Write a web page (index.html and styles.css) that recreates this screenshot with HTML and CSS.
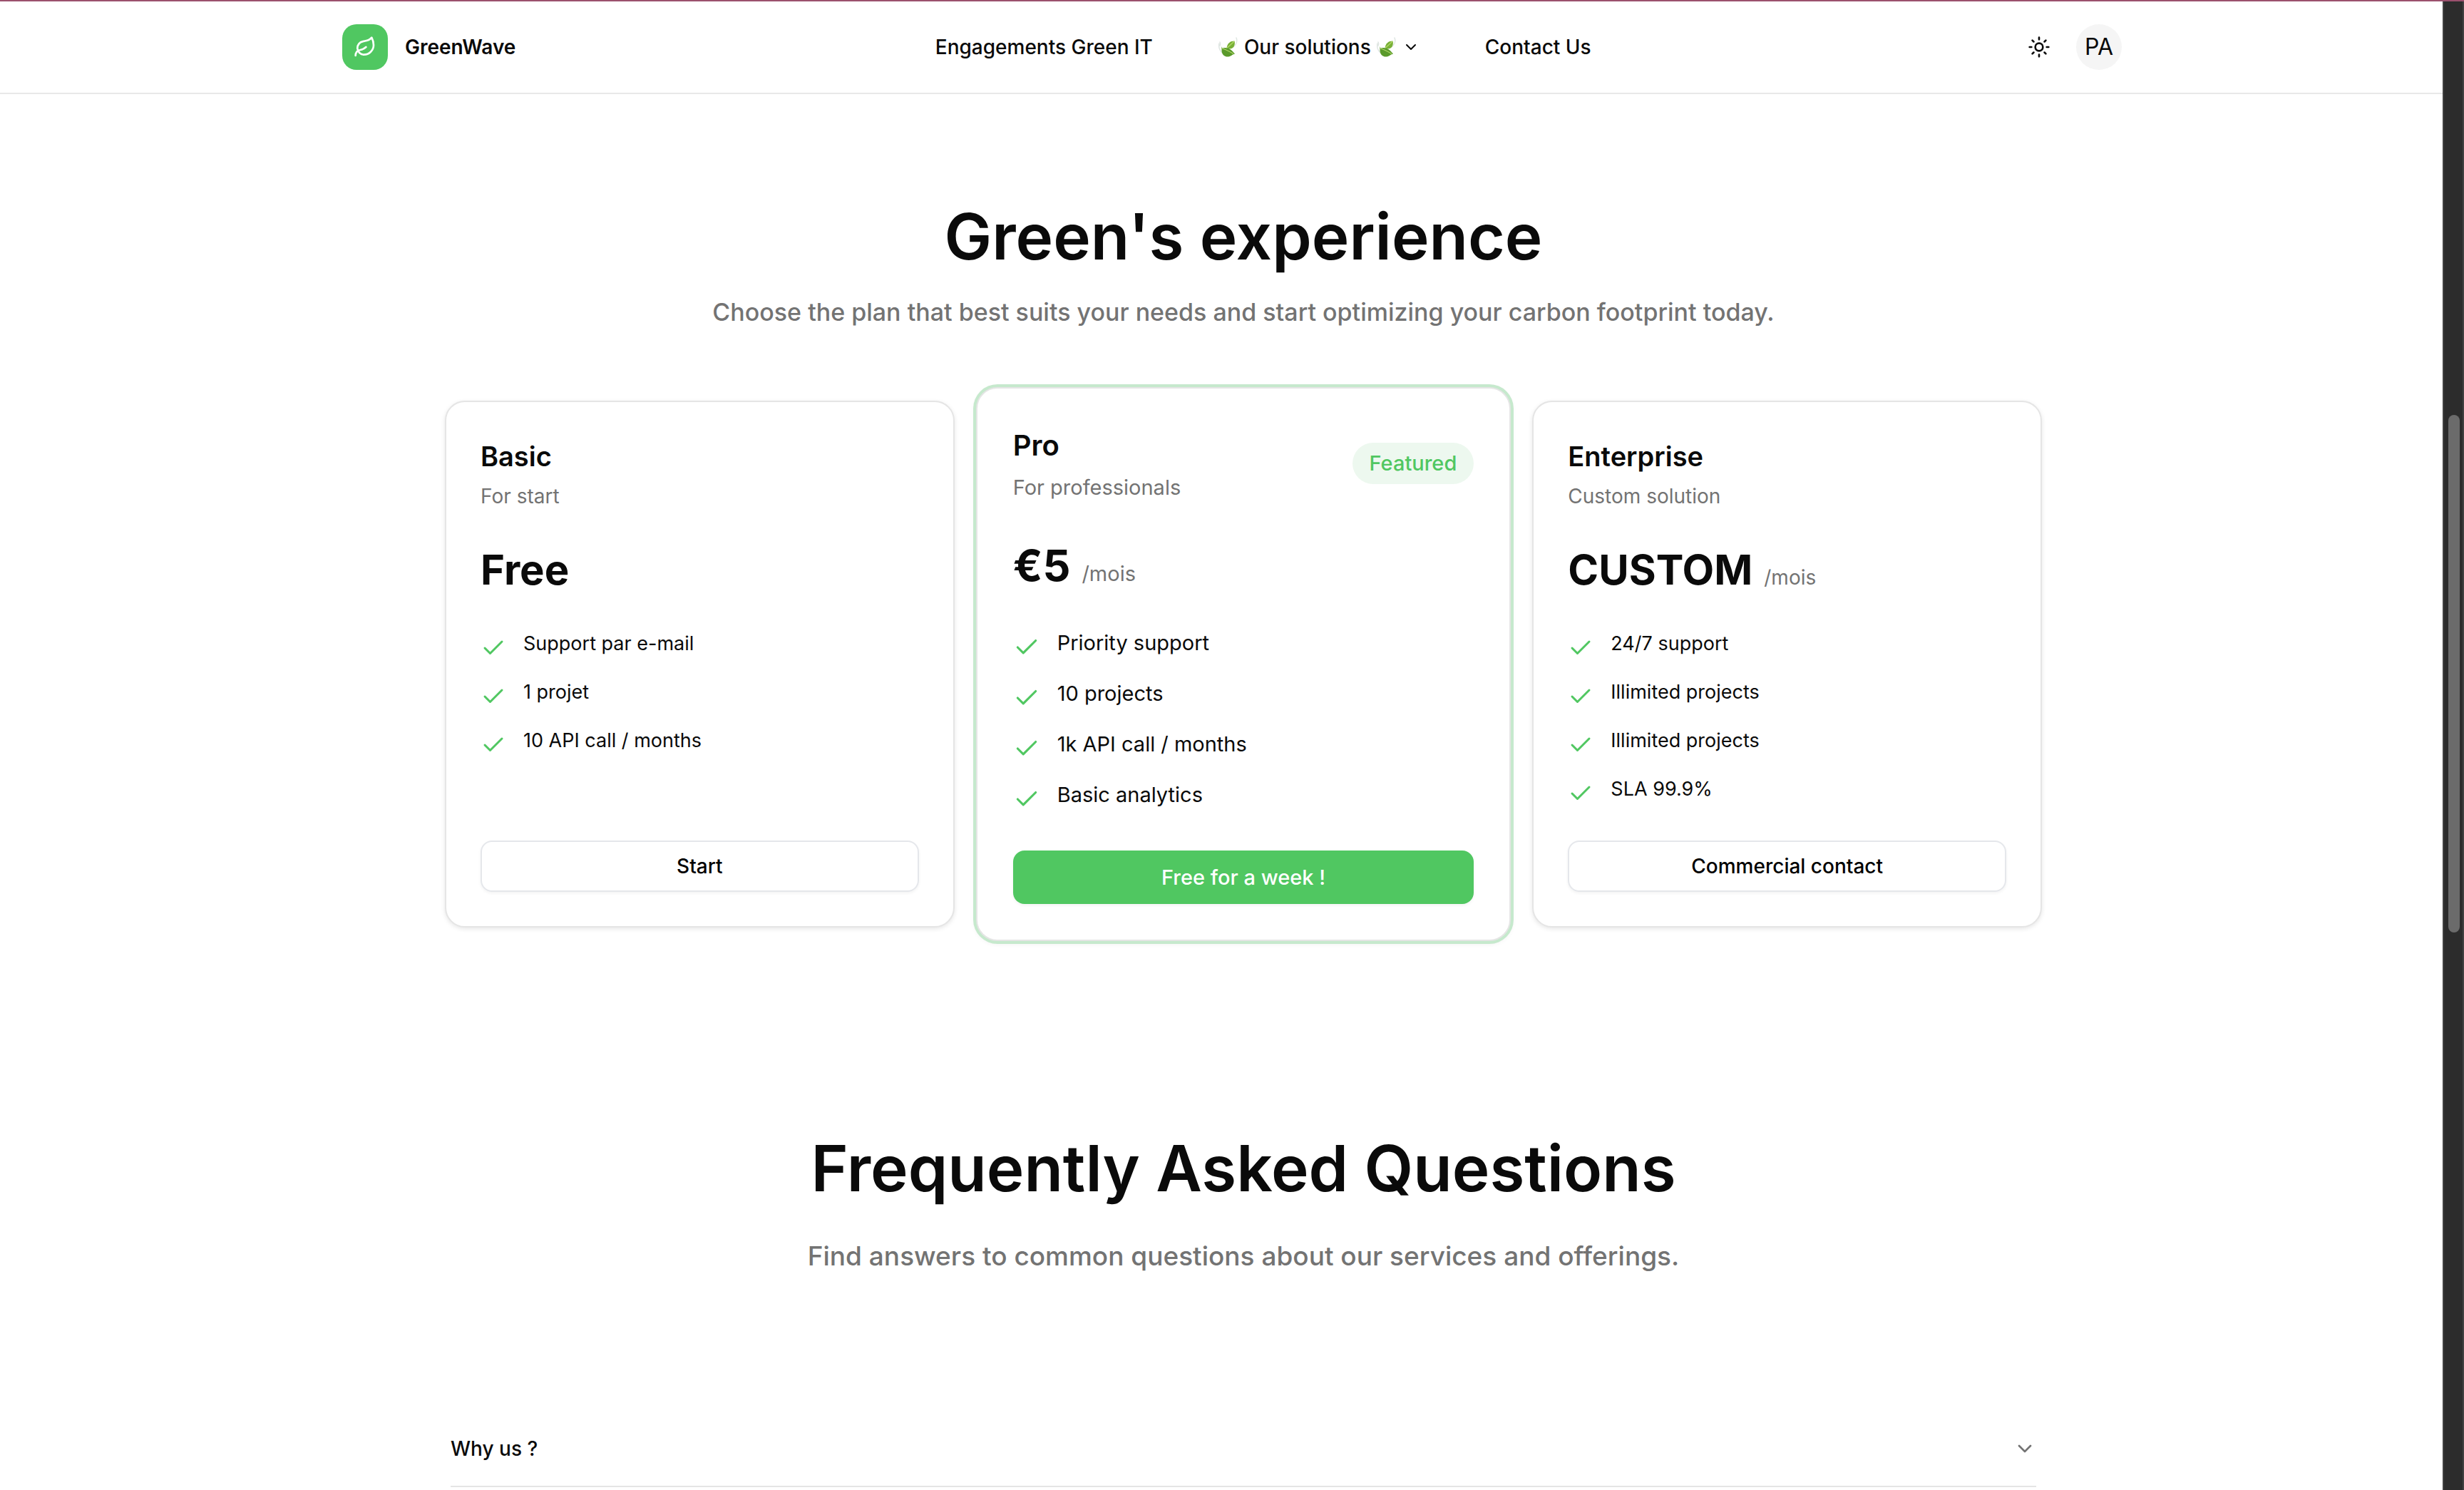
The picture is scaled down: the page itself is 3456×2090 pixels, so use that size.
FILE: index.html
```html
<!DOCTYPE html>
<html lang="en">
<head>
<meta charset="utf-8">
<title>GreenWave</title>
<link rel="stylesheet" href="styles.css">
</head>
<body>
<svg class="sprite" aria-hidden="true">
  <symbol id="check" viewBox="0 0 24 24"><path d="M20 6 9 17l-5-5"/></symbol>
  <symbol id="chevron" viewBox="0 0 24 24"><path d="m6 9 6 6 6-6"/></symbol>
  <symbol id="leaf" viewBox="0 0 24 24"><path d="M11 20A7 7 0 0 1 9.800 6.100C15.500 5 17 4.480 19 2c1 2 2 4.180 2 8 0 5.500-4.780 10-10 10Z"/><path d="M2 21c0-3 1.850-5.360 5.080-6C9.500 14.520 12 13 13 12"/></symbol>
  <symbol id="sun" viewBox="0 0 24 24"><circle cx="12" cy="12" r="4"/><path d="M12 2v2M12 20v2M4.930 4.930l1.410 1.410M17.660 17.660l1.410 1.410M2 12h2M20 12h2M6.340 17.660l-1.410 1.410M19.070 4.930l-1.410 1.410"/></symbol>
  <symbol id="sprig" viewBox="0 0 28 28">
    <path d="M25 1c2 5 0 10-5 13M1 9c-1 5 0 9 4 13M2 12c1-2 1-3 0-5" fill="none" stroke="#dfe6e2" stroke-width="1.500" stroke-linecap="round"/>
    <path d="M22.500 5.500c-6 0-10 3-11 10 4 2 8 1 10-2 1-2 2-5 1-8Z" fill="#78b036"/>
    <path d="M3.500 11.500c0 1 1 3 1.500 4 7-2 13 1 18 8-4 1-5 3.500-9 4-6 .500-10-3-9.500-11Z" fill="#5a9a2b"/>
    <path d="M5 16c5 1 10 4 16 7.500M22 6c-3 3-6 6-10 9" fill="none" stroke="#b3d86a" stroke-width="1.200"/>
  </symbol>
</svg>
<div class="shell">
  <div class="page">
    <header class="topbar">
      <a class="brand" href="#"><span class="brand-mark"><svg class="icon"><use href="#leaf"/></svg></span>GreenWave</a>
      <nav class="nav">
        <a href="#">Engagements Green IT</a>
        <button type="button"><svg class="sprig"><use href="#sprig"/></svg>Our solutions<svg class="sprig"><use href="#sprig"/></svg><svg class="icon icon-small"><use href="#chevron"/></svg></button>
        <a href="#">Contact Us</a>
      </nav>
      <div class="tools">
        <button class="theme" type="button" aria-label="Toggle theme"><svg class="icon"><use href="#sun"/></svg></button>
        <button class="avatar" type="button">PA</button>
      </div>
    </header>
    <main>
      <section class="pricing">
        <h2>Green's experience</h2>
        <p class="lead">Choose the plan that best suits your needs and start optimizing your carbon footprint today.</p>
        <div class="plans">
          <article class="plan">
            <div class="plan-head"><div><h3>Basic</h3><p>For start</p></div></div>
            <div class="price"><strong>Free</strong></div>
            <ul>
              <li><svg class="check"><use href="#check"/></svg>Support par e-mail</li>
              <li><svg class="check"><use href="#check"/></svg>1 projet</li>
              <li><svg class="check"><use href="#check"/></svg>10 API call / months</li>
            </ul>
            <button class="action" type="button">Start</button>
          </article>
          <article class="plan featured">
            <div class="plan-head"><div><h3>Pro</h3><p>For professionals</p></div><span class="badge">Featured</span></div>
            <div class="price"><strong>€5</strong><span>/mois</span></div>
            <ul>
              <li><svg class="check"><use href="#check"/></svg>Priority support</li>
              <li><svg class="check"><use href="#check"/></svg>10 projects</li>
              <li><svg class="check"><use href="#check"/></svg>1k API call / months</li>
              <li><svg class="check"><use href="#check"/></svg>Basic analytics</li>
            </ul>
            <button class="action" type="button">Free for a week !</button>
          </article>
          <article class="plan">
            <div class="plan-head"><div><h3>Enterprise</h3><p>Custom solution</p></div></div>
            <div class="price"><strong>CUSTOM</strong><span>/mois</span></div>
            <ul>
              <li><svg class="check"><use href="#check"/></svg>24/7 support</li>
              <li><svg class="check"><use href="#check"/></svg>Illimited projects</li>
              <li><svg class="check"><use href="#check"/></svg>Illimited projects</li>
              <li><svg class="check"><use href="#check"/></svg>SLA 99.9%</li>
            </ul>
            <button class="action" type="button">Commercial contact</button>
          </article>
        </div>
      </section>
      <section class="faq">
        <h2>Frequently Asked Questions</h2>
        <p class="lead">Find answers to common questions about our services and offerings.</p>
        <div class="questions">
          <button type="button" aria-expanded="false">Why us ?<svg class="icon"><use href="#chevron"/></svg></button>
        </div>
      </section>
    </main>
  </div>
  <div class="rail"><div class="thumb"></div></div>
</div>
</body>
</html>
```
FILE: styles.css
```css
*, *::before, *::after { box-sizing: border-box; }
body, h2, h3, p, ul { margin: 0; padding: 0; }
body {
  background: #fff;
  color: #0a0a0a;
  font: 400 28px/40px Inter, "Liberation Sans", sans-serif;
  border-top: 2px solid #9b506d;
  height: 100vh;
  overflow: hidden;
}
a { color: inherit; text-decoration: none; }
button { font: inherit; color: inherit; background: none; border: 0; padding: 0; }
ul { list-style: none; }
.sprite { display: none; }
.icon, .check { fill: none; stroke: currentColor; stroke-width: 2; stroke-linecap: round; stroke-linejoin: round; flex: none; }
.icon { width: 32px; height: 32px; }
.icon-small { width: 24px; height: 24px; }

.shell { display: flex; height: 100%; }
.page { flex: 1; min-width: 0; overflow: hidden; }
.rail { width: 30px; background: #2c2c2c; border: solid #414141; border-width: 0 2px; padding: 580px 4px 0 6px; }
.thumb { height: 726px; width: 16px; border-radius: 8px; background: #6b6b6b; }

.topbar {
  display: flex; align-items: center; justify-content: space-between;
  height: 130px; padding: 0 450px 0 480px;
  border-bottom: 2px solid #e8e8e8;
}
.brand { display: flex; align-items: center; gap: 24px; font-weight: 600; }
.brand-mark { display: grid; place-items: center; width: 64px; height: 64px; border-radius: 20px; background: #50c761; color: #fff; }
.nav { display: flex; gap: 92px; margin-right: 8px; font-weight: 500; }
.nav button { display: flex; align-items: center; gap: 8px; font-weight: 500; }
.sprig { width: 28px; height: 28px; }
.tools { display: flex; gap: 20px; }
.theme, .avatar { display: grid; place-items: center; width: 64px; height: 64px; }
.avatar { border-radius: 50%; background: #f5f5f5; font-size: 32px; }

main { padding: 0 562px 0 624px; }
h2 { font-size: 89px; line-height: 96px; font-weight: 600; text-align: center; }
.lead { color: #737373; font-weight: 500; text-align: center; }
.pricing { padding-top: 152px; }
.pricing .lead { font-size: 34px; line-height: 56px; margin-top: 30px; }
.plans { display: grid; grid-template-columns: repeat(3, 1fr); gap: 48px; margin-top: 96px; }
.plan {
  --gap: 48px; --text: 28px; --item: 27px; --line: 40px;
  display: flex; flex-direction: column; gap: var(--gap);
  padding: var(--gap);
  border: 2px solid #e5e5e5; border-radius: 28px;
  background: #fff;
  box-shadow: 0 2px 6px rgba(0, 0, 0, .1);
  font-size: var(--text); line-height: var(--line);
}
.plan-head { display: flex; align-items: center; justify-content: space-between; }
h3 { font-size: 38px; line-height: 56px; font-weight: 600; margin-bottom: 8px; }
.plan-head p, .price span { color: #737373; }
.price { display: flex; align-items: baseline; gap: 16px; }
.price strong { font-size: 58px; line-height: 71px; font-weight: 700; }
.plan ul { display: grid; gap: 24px; font-size: var(--item); }
.plan li { display: flex; align-items: flex-start; gap: 24px; }
.check { width: 36px; height: 36px; margin-top: 8px; color: #50c761; }
.action {
  height: 72px; margin-top: auto;
  border: 2px solid #e5e7eb; border-radius: 16px;
  box-shadow: 0 2px 4px rgba(0, 0, 0, .05);
  font-weight: 500; color: #000;
}
.featured {
  --gap: 50px; --text: 29px; --item: 29px; --line: 42px;
  margin: -19px -18px;
  border-radius: 30px;
  box-shadow: 0 0 0 4px #c6e9cd, 0 2px 8px rgba(0, 0, 0, .1);
}
.featured h3 { font-size: 40px; line-height: 60px; }
.featured .price strong { font-size: 61px; line-height: 76px; }
.featured ul { gap: 25px; }
.featured .check { width: 38px; height: 38px; }
.featured .action { height: 75px; border: 0; background: #50c761; color: #fff; }
.badge { padding: 8px 24px; border-radius: 29px; background: #edf8ef; color: #50c761; font-weight: 500; }

.faq { padding-top: 290px; }
.faq .lead { font-size: 37px; line-height: 56px; margin-top: 47px; }
.questions { margin: 190px 8px 0; }
.questions button {
  display: flex; align-items: center; justify-content: space-between;
  width: 100%; padding: 32px 0;
  border-bottom: 2px solid #e5e5e5; font-weight: 500;
}
.questions .icon { color: #737373; }
```
